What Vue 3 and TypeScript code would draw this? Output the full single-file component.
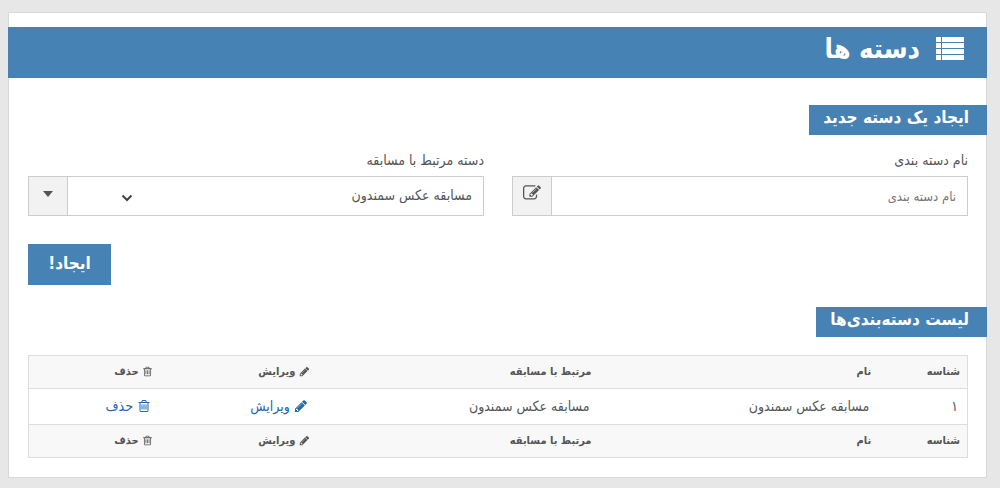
<script setup lang="ts">
import { ref } from 'vue'

interface Category {
  id: string
  name: string
  contest: string
}

const pencilPath =
  'M491 1536l91-91-235-235-91 91v107h128v128h107zm523-928q0-22-22-22-10 0-17 7l-542 542q-7 7-7 17 0 22 22 22 10 0 17-7l542-542q7-7 7-17zm-54-192l416 416-832 832h-416v-416zm683 96q0 53-37 90l-166 166-416-416 166-165q36-38 90-38 53 0 91 38l235 234q37 39 37 91z'
const trashPath =
  'M704 736v576q0 14-9 23t-23 9h-64q-14 0-23-9t-9-23v-576q0-14 9-23t23-9h64q14 0 23 9t9 23zm256 0v576q0 14-9 23t-23 9h-64q-14 0-23-9t-9-23v-576q0-14 9-23t23-9h64q14 0 23 9t9 23zm256 0v576q0 14-9 23t-23 9h-64q-14 0-23-9t-9-23v-576q0-14 9-23t23-9h64q14 0 23 9t9 23zm128 724v-948h-896v948q0 22 7 40.5t14.5 27 10.5 8.5h832q3 0 10.5-8.5t14.5-27 7-40.5zm-672-1076h448l-48-117q-7-9-17-11h-317q-10 2-17 11zm928 32v64q0 14-9 23t-23 9h-96v948q0 83-47 143.5t-113 60.5h-832q-66 0-113-58.5t-47-141.5v-952h-96q-14 0-23-9t-9-23v-64q0-14 9-23t23-9h309l70-167q15-37 54-63t79-26h320q40 0 79 26t54 63l70 167h309q14 0 23 9t9 23z'
const editPath =
  'M888 1184l116-116-152-152-116 116v56h96v96h56zm440-720q-16-16-33 1l-350 350q-17 17-1 33t33-1l350-350q17-17 1-33zm80 594v190q0 119-84.5 203.5t-203.5 84.5h-832q-119 0-203.5-84.5t-84.5-203.5v-832q0-119 84.5-203.5t203.5-84.5h832q63 0 117 25 15 7 18 23 3 17-9 29l-49 49q-14 14-32 8-23-6-45-6h-832q-66 0-113 47t-47 113v832q0 66 47 113t113 47h832q66 0 113-47t47-113v-126q0-13 9-22l64-64q15-15 35-7t20 29zm-96-738l288 288-672 672h-288v-288zm444 132l-92 92-288-288 92-92q28-28 68-28t68 28l152 152q28 28 28 68t-28 68z'

const headings = [
  { label: 'شناسه', icon: '' },
  { label: 'نام', icon: '' },
  { label: 'مرتبط با مسابقه', icon: '' },
  { label: 'ویرایش', icon: pencilPath },
  { label: 'حذف', icon: trashPath },
]

const contests = ['مسابقه عکس سمندون']
const categories: Category[] = [{ id: '۱', name: 'مسابقه عکس سمندون', contest: 'مسابقه عکس سمندون' }]

const newName = ref('')
const contest = ref(contests[0])
</script>

<template>
  <main class="panel" dir="rtl" lang="fa">
    <header class="title-bar">
      <svg class="list-icon" viewBox="0 0 28 23" aria-hidden="true">
        <path d="M0 0h5v5H0zM6 0h22v5H6zM0 6h5v5H0zM6 6h22v5H6zM0 12h5v5H0zM6 12h22v5H6zM0 18h5v5H0zM6 18h22v5H6z" />
      </svg>
      <h1>دسته ها</h1>
    </header>

    <h2 class="ribbon">ایجاد یک دسته جدید</h2>

    <form class="form" @submit.prevent>
      <div class="field">
        <label for="category-name">نام دسته بندی</label>
        <div class="group">
          <input id="category-name" v-model="newName" type="text" placeholder="نام دسته بندی" />
          <span class="addon">
            <svg class="edit-icon" viewBox="0 0 1792 1792" aria-hidden="true"><path :d="editPath" /></svg>
          </span>
        </div>
      </div>
      <div class="field">
        <label for="category-contest">دسته مرتبط با مسابقه</label>
        <div class="group">
          <div class="select-wrap">
            <select id="category-contest" v-model="contest">
              <option v-for="c in contests" :key="c" :value="c">{{ c }}</option>
            </select>
            <svg class="chevron" viewBox="0 0 12 8" aria-hidden="true"><path d="M1.500 1.500L6 6L10.500 1.500" /></svg>
          </div>
          <span class="addon">
            <svg class="caret" viewBox="0 0 10 6" aria-hidden="true"><path d="M0 0h10L5 6z" /></svg>
          </span>
        </div>
      </div>
      <button class="create" type="submit">ایجاد!</button>
    </form>

    <h2 class="ribbon">لیست دسته‌بندی‌ها</h2>

    <table class="list">
      <colgroup>
        <col class="col-id" />
        <col class="col-name" />
        <col class="col-contest" />
        <col class="col-edit" />
        <col />
      </colgroup>
      <thead>
        <tr>
          <th v-for="h in headings" :key="h.label" scope="col">
            <svg v-if="h.icon" class="small-icon" viewBox="0 0 1792 1792" aria-hidden="true"><path :d="h.icon" /></svg>
            {{ h.label }}
          </th>
        </tr>
      </thead>
      <tbody>
        <tr v-for="c in categories" :key="c.id">
          <td>{{ c.id }}</td>
          <td>{{ c.name }}</td>
          <td>{{ c.contest }}</td>
          <td>
            <a href="#edit">
              <svg class="row-icon" viewBox="0 0 1792 1792" aria-hidden="true"><path :d="pencilPath" /></svg>
              ویرایش
            </a>
          </td>
          <td>
            <a href="#delete">
              <svg class="row-icon" viewBox="0 0 1792 1792" aria-hidden="true"><path :d="trashPath" /></svg>
              حذف
            </a>
          </td>
        </tr>
      </tbody>
      <tfoot>
        <tr>
          <th v-for="h in headings" :key="h.label">
            <svg v-if="h.icon" class="small-icon" viewBox="0 0 1792 1792" aria-hidden="true"><path :d="h.icon" /></svg>
            {{ h.label }}
          </th>
        </tr>
      </tfoot>
    </table>
  </main>
</template>

<style>
body {
  margin: 0;
  background: #e7e7e7;
}
</style>

<style scoped>
* {
  box-sizing: border-box;
}

.panel {
  margin: 12px 13px 10px 8px;
  padding: 14px 18px 19px 19px;
  border: 1px solid #d8d8d8;
  background: #fff;
  color: #555;
  font-family: "DejaVu Sans Condensed", "DejaVu Sans", sans-serif;
  font-size: 14px;
}

svg {
  fill: currentColor;
}

.title-bar {
  display: flex;
  align-items: flex-start;
  gap: 16px;
  height: 51px;
  margin: 0 -19px 27px -20px;
  padding: 10px 23px 0;
  background: #4682b4;
  color: #fff;
}

.list-icon {
  width: 28px;
  height: 23px;
}

h1 {
  margin: 0;
  font-size: 27px;
  line-height: 24px;
}

.ribbon {
  width: fit-content;
  height: 30px;
  margin: 0 -19px 0 0;
  padding: 0 18px 0 14px;
  background: #4682b4;
  color: #fff;
  font-size: 17px;
  line-height: 24px;
}

.form {
  display: grid;
  grid-template-columns: 1fr 1fr;
  gap: 28px;
  margin: 15px 0 22px;
}

label {
  display: block;
  margin-bottom: 6px;
  line-height: 20px;
}

.group {
  display: flex;
  height: 40px;
  border: 1px solid #ccc;
}

input,
select {
  width: 100%;
  height: 100%;
  min-width: 0;
  padding: 0 11px;
  border: 0;
  border-radius: 0;
  outline: 0;
  background: #fff;
  color: #555;
  font-family: inherit;
  font-size: 14px;
}

input {
  font-size: 13px;
}

select {
  padding-bottom: 2px;
  appearance: none;
}

input::placeholder {
  color: #757575;
  opacity: 1;
}

.select-wrap {
  position: relative;
  flex: 1;
}

.chevron {
  position: absolute;
  left: 53px;
  top: 17px;
  width: 12px;
  height: 8px;
  fill: none;
  stroke: #444;
  stroke-width: 2;
}

.addon {
  display: flex;
  flex: none;
  justify-content: center;
  align-items: flex-start;
  width: 39px;
  border-right: 1px solid #ccc;
  background: #f2f2f2;
}

.edit-icon {
  width: 18px;
  height: 18px;
  margin-top: 7px;
}

.caret {
  width: 10px;
  height: 6px;
  margin-top: 14px;
}

.create {
  grid-column: 2;
  justify-self: end;
  width: 83px;
  height: 41px;
  padding: 0 0 4px;
  border: 0;
  background: #4682b4;
  color: #fff;
  font-family: inherit;
  font-size: 17px;
  font-weight: bold;
}

.list {
  width: 100%;
  margin-top: 18px;
  border: 1px solid #ddd;
  border-collapse: collapse;
  table-layout: fixed;
}

.col-id {
  width: 9.5%;
}

.col-name {
  width: 29.8%;
}

.col-contest {
  width: 30%;
}

.col-edit {
  width: 16.7%;
}

th,
td {
  border-bottom: 1px solid #ddd;
  text-align: right;
  white-space: nowrap;
}

th {
  height: 33px;
  padding: 0 7px 2px;
  background: #f8f8f8;
  font-size: 11px;
}

td {
  height: 36px;
  padding: 0 9px 2px;
}

a {
  color: #2068b0;
  text-decoration: none;
}

.small-icon {
  width: 11px;
  height: 11px;
  vertical-align: -2px;
}

.row-icon {
  width: 14px;
  height: 14px;
  vertical-align: -2px;
}
</style>
